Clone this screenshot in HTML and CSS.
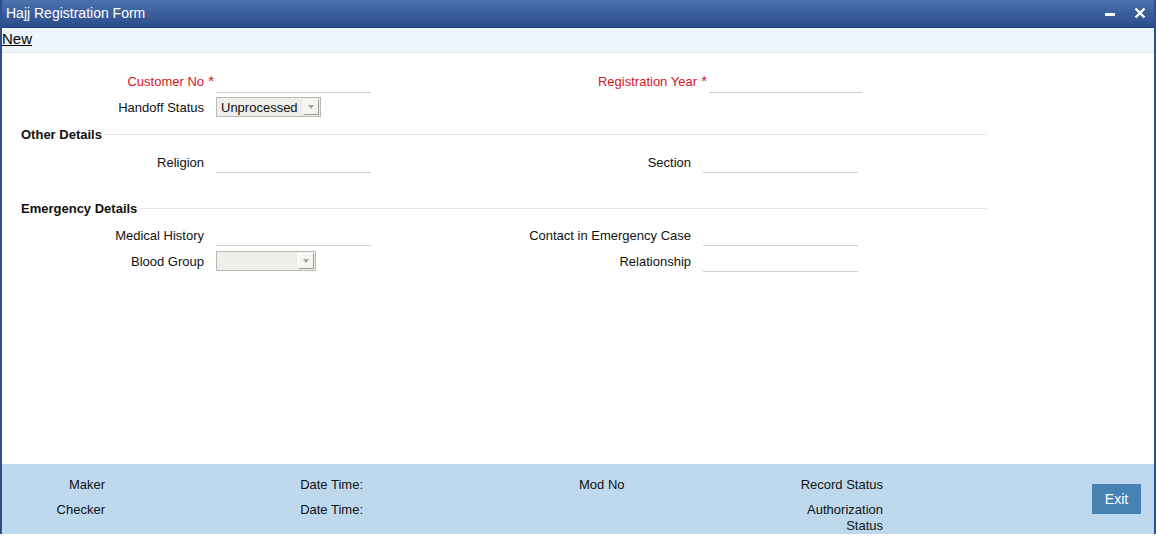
FILE: index.html
```html
<!DOCTYPE html>
<html lang="en">
<head>
  <meta charset="UTF-8">
  <title>Hajj Registration Form</title>
  <link rel="stylesheet" href="styles.css">
</head>
<body>

  <div class="window">
    <!-- Barra de titulo -->
    <div class="titlebar">
      <span class="title">Hajj Registration Form</span>
      <div class="win-buttons">
        <span class="btn-min"></span>
        <svg class="btn-close" width="12" height="12" viewBox="0 0 12 12">
          <path d="M1.5 1.5 L10.5 10.5 M10.5 1.5 L1.5 10.5" stroke="#fff" stroke-width="2.4"/>
        </svg>
      </div>
    </div>

    <div class="toolbar"><a href="#">New</a></div>

    <div class="content">
      <div class="row top">
        <label class="lbl req">Customer No<span class="star">*</span></label>
        <div class="field"></div>
        <label class="lbl lbl-right req shift">Registration Year<span class="star">*</span></label>
        <div class="field shift-field"></div>
      </div>
      <div class="row">
        <label class="lbl">Handoff Status</label>
        <div class="select wide"><span>Unprocessed</span><i class="arrow"></i></div>
      </div>

      <div class="section first">Other Details</div>
      <div class="row">
        <label class="lbl">Religion</label>
        <div class="field"></div>
        <label class="lbl lbl-right">Section</label>
        <div class="field"></div>
      </div>

      <div class="section second">Emergency Details</div>
      <div class="row">
        <label class="lbl">Medical History</label>
        <div class="field"></div>
        <label class="lbl lbl-right">Contact in Emergency Case</label>
        <div class="field"></div>
      </div>
      <div class="row">
        <label class="lbl">Blood Group</label>
        <div class="select narrow"><span></span><i class="arrow"></i></div>
        <label class="lbl lbl-right after-select">Relationship</label>
        <div class="field"></div>
      </div>
    </div>

    <!-- Pie de auditoria -->
    <div class="footer">
      <div class="audit">
        <span class="c1">Maker</span>
        <span class="c2">Date Time:</span>
        <span class="c3">Mod No</span>
        <span class="c4">Record Status</span>
        <span class="c1">Checker</span>
        <span class="c2">Date Time:</span>
        <span class="c3"></span>
        <span class="c4">Authorization<br>Status</span>
      </div>
      <button class="exit">Exit</button>
    </div>
  </div>

</body>
</html>
```

FILE: styles.css
```css
/* Reset basico */
* { margin: 0; padding: 0; box-sizing: border-box; }
body {
  font-family: "Liberation Sans", Arial, sans-serif;
  font-size: 13px;
  color: #111;
  background: #fff;
}

/* Ventana */
.window {
  height: 534px;
  display: flex;
  flex-direction: column;
  border-left: 2px solid #2d4f8e;
  border-right: 2px solid #2d4f8e;
}

.titlebar {
  height: 28px;
  display: flex;
  align-items: center;
  justify-content: space-between;
  padding: 0 0 2px 4px;
  background: linear-gradient(#4d72ac, #2b4c8b);
  border-bottom: 1px solid #1f3d77;
  color: #fff;
}
.title { font-size: 14px; }
.win-buttons {
  display: flex;
  align-items: center;
  gap: 19px;
  padding-right: 8px;
}
.btn-min {
  display: block;
  width: 10px;
  height: 3px;
  margin-top: 3px;
  background: #fff;
}

.toolbar {
  height: 25px;
  background: #eef5fd;
  border-bottom: 1px solid #dfe4ea;
  padding-top: 2px;
}
.toolbar a {
  color: #000;
  font-size: 15px;
  text-decoration: underline;
}

/* Formulario */
.content {
  flex: 1;
  padding-top: 16px;
}
.row {
  display: flex;
  align-items: center;
  height: 26px;
}
.row.top { height: 25px; }
.lbl {
  width: 202px;
  text-align: right;
  position: relative;
}
.lbl-right { width: 320px; }
.lbl-right.after-select { width: 375px; }
.lbl.shift { width: 326px; }
.req { color: #d3141f; }
.star {
  position: absolute;
  right: -10px;
  top: -2px;
  font-size: 15px;
}
.field {
  width: 155px;
  height: 21px;
  margin-left: 12px;
  margin-top: 1px;
  border-bottom: 1px solid #cfcfcf;
}
.shift-field { margin-left: 12px; width: 153px; }

.select {
  height: 20px;
  margin-left: 12px;
  display: flex;
  align-items: center;
  justify-content: space-between;
  background: #efeee9;
  border: 1px solid #b9b9b5;
  padding: 0 1px 0 4px;
}
.select.wide { width: 105px; }
.select.narrow { width: 100px; }
.arrow {
  width: 16px;
  height: 16px;
  background: #f4f4f1;
  border: 1px solid #fff;
  border-right-color: #9a9a96;
  border-bottom-color: #9a9a96;
  position: relative;
}
.arrow::after {
  content: "";
  position: absolute;
  left: 4px;
  top: 5px;
  border-left: 3.5px solid transparent;
  border-right: 3.5px solid transparent;
  border-top: 4px solid #a3a3a3;
}

.section {
  display: flex;
  align-items: center;
  height: 20px;
  margin-left: 19px;
  margin-right: 167px;
  font-weight: bold;
}
.section::after {
  content: "";
  flex: 1;
  margin-left: 2px;
  border-top: 1px solid #e6e6e6;
}
.section.first { margin-top: 4px; margin-bottom: 5px; }
.section.second { margin-top: 23px; margin-bottom: 4px; }

/* Pie */
.footer {
  height: 70px;
  background: #bed9ee;
  display: flex;
  align-items: center;
  justify-content: space-between;
  padding-right: 13px;
}
.audit {
  display: grid;
  grid-template-columns: 103px 258px 397px 123px;
  row-gap: 9px;
  line-height: 16px;
  align-self: flex-start;
  padding-top: 13px;
}
.c1, .c2, .c4 { text-align: right; }
.c3 { padding-left: 216px; }
.exit {
  width: 49px;
  height: 30px;
  border: none;
  background: #4682b4;
  color: #fff;
  font-family: "Liberation Sans", Arial, sans-serif;
  font-size: 14px;
}
```
